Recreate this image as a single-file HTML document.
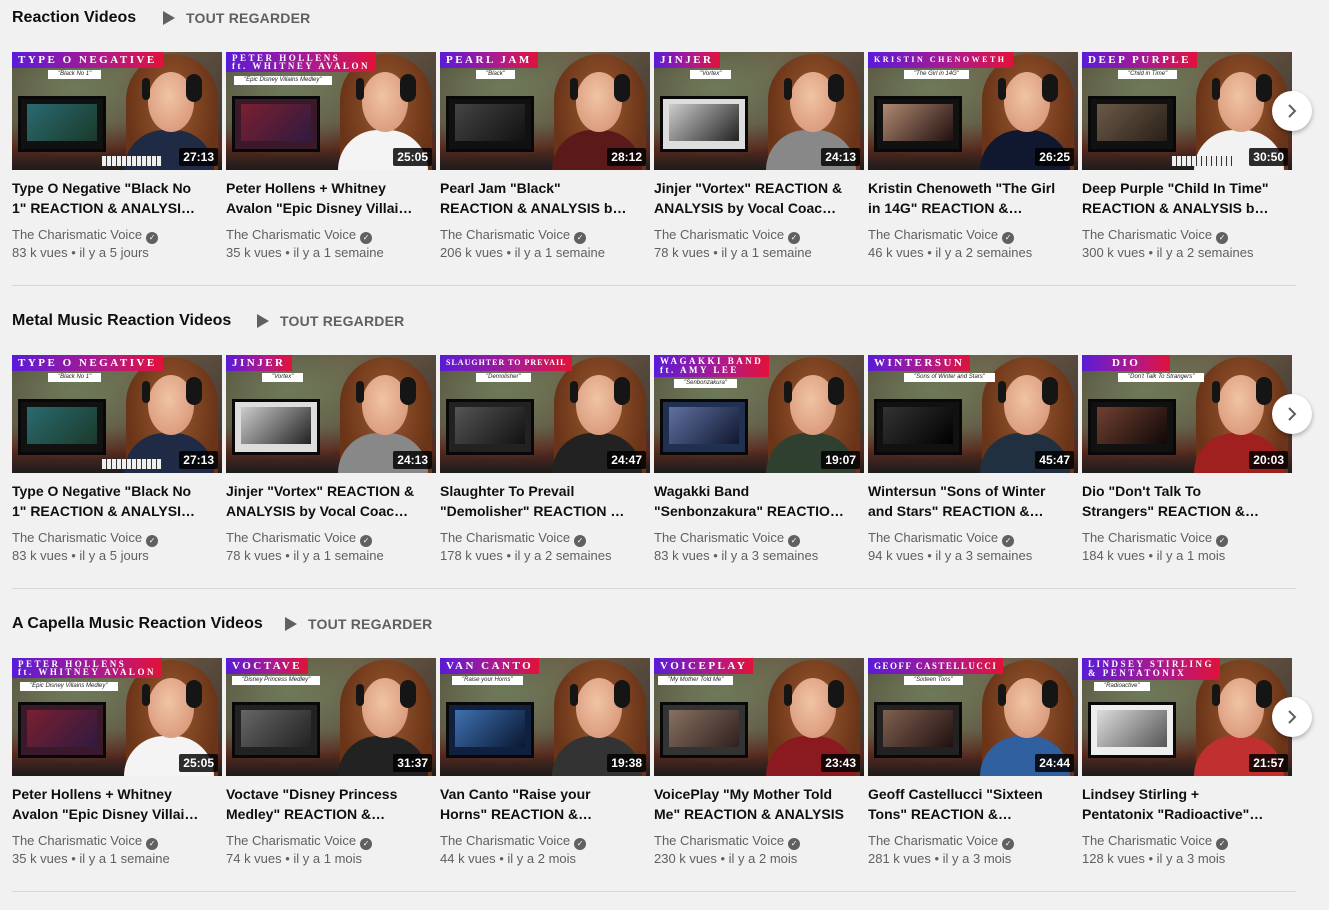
<!DOCTYPE html>
<html><head><meta charset="utf-8"><style>
*{margin:0;padding:0;box-sizing:border-box}
body{width:1329px;height:910px;background:#f1f1f1;font-family:"Liberation Sans",Arial,sans-serif;position:relative;overflow:hidden}
.shelf{position:absolute;left:0;width:1329px;height:303px}
.st{position:absolute;left:12px;top:9px;font-size:16px;font-weight:bold;color:#0f0f0f;white-space:nowrap}
.pl{position:absolute;top:11px;width:0;height:0;border-left:12px solid #606060;border-top:7px solid transparent;border-bottom:7px solid transparent}
.ta{position:absolute;top:10px;font-size:14px;font-weight:bold;color:#606060;letter-spacing:.2px}
.card{position:absolute;top:52px;width:210px}
.th{position:relative;width:210px;height:118px;overflow:hidden;background:linear-gradient(135deg,#4a4030 0%,#6b5a45 40%,#3a3330 100%)}
.wall{position:absolute;left:0;top:0;width:210px;height:118px;background:radial-gradient(ellipse at 30% 30%,#6d7a5a 0%,transparent 60%),linear-gradient(180deg,transparent 60%,#5a2a1e 80%,#1c1c1c 100%)}
.scr{position:absolute;left:6px;top:44px;width:88px;height:56px;background:#111;border:3px solid #080808}
.scr i{position:absolute;left:6px;top:5px;right:6px;bottom:8px;background:linear-gradient(135deg,#2a6a70,#1a3a2a)}
.ban{position:absolute;left:0;top:0;height:16px;padding:0 6px;background:linear-gradient(90deg,#5a1bd8,#b01a8a 60%,#e0123a);color:#fff;font-family:"Liberation Serif",serif;font-weight:bold;font-size:11px;letter-spacing:2.5px;line-height:16px;white-space:nowrap}
.sub{position:absolute;top:18px;left:36px;height:9px;background:#fff;color:#222;font-size:6px;font-style:italic;line-height:9px;padding:0 10px;white-space:nowrap}
.hair{position:absolute;right:4px;top:2px;width:92px;height:130px;border-radius:46px 46px 10px 10px;background:radial-gradient(ellipse at 50% 40%,#9a5a30,#6a3418 70%)}
.face{position:absolute;right:28px;top:20px;width:46px;height:60px;border-radius:50%;background:radial-gradient(ellipse at 45% 40%,#f0c4a4,#d8987a 80%)}
.body{position:absolute;right:8px;top:78px;width:90px;height:50px;border-radius:40px 40px 0 0;background:#1f2a44}
.hp{position:absolute;right:20px;top:22px;width:16px;height:28px;border-radius:8px;background:#151515}
.hp2{position:absolute;right:72px;top:26px;width:8px;height:22px;border-radius:4px;background:#151515}
.keys{position:absolute;left:90px;top:104px;width:60px;height:10px;background:repeating-linear-gradient(90deg,#eee 0 4px,#333 4px 5px)}
.dur{position:absolute;right:4px;bottom:4px;background:rgba(0,0,0,.82);color:#fff;font-size:12px;font-weight:bold;padding:0 4px;height:18px;line-height:18px;border-radius:2px}
.t{margin-top:8px;width:190px;font-size:14px;font-weight:bold;line-height:20px;color:#0f0f0f;height:40px;overflow:hidden;display:-webkit-box;-webkit-line-clamp:2;-webkit-box-orient:vertical}
.c{margin-top:8px;font-size:13px;color:#606060;line-height:18px;white-space:nowrap}
.ck{display:inline-block;width:12px;height:12px;border-radius:50%;background:#606060;color:#fff;font-size:8px;line-height:12px;text-align:center;vertical-align:-1px;margin-left:4px}
.v{font-size:13px;color:#606060;line-height:18px;white-space:nowrap}
.nx{position:absolute;left:1272px;top:39px;width:40px;height:40px;border-radius:50%;background:#fff;box-shadow:0 2px 5px rgba(0,0,0,.3)}
.nx svg{position:absolute;left:12px;top:12px}
.hr{position:absolute;left:12px;top:285px;width:1284px;height:1px;background:#d6d6d6}
</style></head><body>

<div class="shelf" style="top:0">
<div class="st">Reaction Videos</div><div class="pl" style="left:163px"></div><div class="ta" style="left:186px">TOUT REGARDER</div>
<div class="card" style="left:12px"><div class="th"><div class="wall"></div><div class="scr"><i></i></div><div class="hair"></div><div class="body"></div><div class="face"></div><div class="hp"></div><div class="hp2"></div><div class="keys"></div><div class="ban">TYPE O NEGATIVE</div><div class="sub">"Black No 1"</div><div class="dur">27:13</div></div><div class="t">Type O Negative "Black No 1" REACTION &amp; ANALYSIS by Vocal Coach</div><div class="c">The Charismatic Voice<span class="ck">✓</span></div><div class="v">83 k vues • il y a 5 jours</div></div>
<div class="card" style="left:226px"><div class="th"><div class="wall"></div><div class="scr" style="background:#3a1a2a"><i style="background:linear-gradient(135deg,#7a2030,#301a40)"></i></div><div class="hair"></div><div class="body" style="background:#f4f4f4"></div><div class="face"></div><div class="hp"></div><div class="hp2"></div><div class="ban" style="font-size:9px;line-height:8px;height:20px;padding-top:2px">PETER HOLLENS<br>ft. WHITNEY AVALON</div><div class="sub" style="top:24px;left:8px">"Epic Disney Villains Medley"</div><div class="dur">25:05</div></div><div class="t">Peter Hollens + Whitney Avalon "Epic Disney Villains Medley"</div><div class="c">The Charismatic Voice<span class="ck">✓</span></div><div class="v">35 k vues • il y a 1 semaine</div></div>
<div class="card" style="left:440px"><div class="th"><div class="wall"></div><div class="scr" style="background:#111"><i style="background:linear-gradient(135deg,#444,#111)"></i></div><div class="hair"></div><div class="body" style="background:#5a1a1a"></div><div class="face"></div><div class="hp"></div><div class="hp2"></div><div class="ban">PEARL JAM</div><div class="sub">"Black"</div><div class="dur">28:12</div></div><div class="t">Pearl Jam "Black" REACTION &amp; ANALYSIS by Vocal Coach</div><div class="c">The Charismatic Voice<span class="ck">✓</span></div><div class="v">206 k vues • il y a 1 semaine</div></div>
<div class="card" style="left:654px"><div class="th"><div class="wall"></div><div class="scr" style="background:#ddd"><i style="background:linear-gradient(135deg,#ccc,#222)"></i></div><div class="hair"></div><div class="body" style="background:#888"></div><div class="face"></div><div class="hp"></div><div class="hp2"></div><div class="ban">JINJER</div><div class="sub">"Vortex"</div><div class="dur">24:13</div></div><div class="t">Jinjer "Vortex" REACTION &amp; ANALYSIS by Vocal Coach / Opera</div><div class="c">The Charismatic Voice<span class="ck">✓</span></div><div class="v">78 k vues • il y a 1 semaine</div></div>
<div class="card" style="left:868px"><div class="th"><div class="wall"></div><div class="scr" style="background:#111"><i style="background:linear-gradient(135deg,#b08870,#201010)"></i></div><div class="hair"></div><div class="body" style="background:#101830"></div><div class="face"></div><div class="hp"></div><div class="hp2"></div><div class="ban" style="font-size:8px">KRISTIN CHENOWETH</div><div class="sub">"The Girl in 14G"</div><div class="dur">26:25</div></div><div class="t">Kristin Chenoweth "The Girl in 14G" REACTION &amp; ANALYSIS</div><div class="c">The Charismatic Voice<span class="ck">✓</span></div><div class="v">46 k vues • il y a 2 semaines</div></div>
<div class="card" style="left:1082px"><div class="th"><div class="wall"></div><div class="scr" style="background:#111"><i style="background:linear-gradient(135deg,#6a5a48,#2a2018)"></i></div><div class="hair"></div><div class="body" style="background:#f2f2f2"></div><div class="face"></div><div class="hp"></div><div class="hp2"></div><div class="keys"></div><div class="ban">DEEP PURPLE</div><div class="sub">"Child in Time"</div><div class="dur">30:50</div></div><div class="t">Deep Purple "Child In Time" REACTION &amp; ANALYSIS by Vocal Coach</div><div class="c">The Charismatic Voice<span class="ck">✓</span></div><div class="v">300 k vues • il y a 2 semaines</div></div>
<div class="nx" style="top:91px"><svg width="16" height="16" viewBox="0 0 16 16"><path d="M5 2l6 6-6 6" fill="none" stroke="#606060" stroke-width="2"/></svg></div>
<div class="hr"></div>
</div>

<div class="shelf" style="top:303px">
<div class="st">Metal Music Reaction Videos</div><div class="pl" style="left:257px"></div><div class="ta" style="left:280px">TOUT REGARDER</div>
<div class="card" style="left:12px"><div class="th"><div class="wall"></div><div class="scr"><i></i></div><div class="hair"></div><div class="body"></div><div class="face"></div><div class="hp"></div><div class="hp2"></div><div class="keys"></div><div class="ban">TYPE O NEGATIVE</div><div class="sub">"Black No 1"</div><div class="dur">27:13</div></div><div class="t">Type O Negative "Black No 1" REACTION &amp; ANALYSIS by Vocal Coach</div><div class="c">The Charismatic Voice<span class="ck">✓</span></div><div class="v">83 k vues • il y a 5 jours</div></div>
<div class="card" style="left:226px"><div class="th"><div class="wall"></div><div class="scr" style="background:#ddd"><i style="background:linear-gradient(135deg,#ccc,#222)"></i></div><div class="hair"></div><div class="body" style="background:#888"></div><div class="face"></div><div class="hp"></div><div class="hp2"></div><div class="ban">JINJER</div><div class="sub">"Vortex"</div><div class="dur">24:13</div></div><div class="t">Jinjer "Vortex" REACTION &amp; ANALYSIS by Vocal Coach / Opera</div><div class="c">The Charismatic Voice<span class="ck">✓</span></div><div class="v">78 k vues • il y a 1 semaine</div></div>
<div class="card" style="left:440px"><div class="th"><div class="wall"></div><div class="scr" style="background:#222"><i style="background:linear-gradient(135deg,#555,#111)"></i></div><div class="hair"></div><div class="body" style="background:#222"></div><div class="face"></div><div class="hp"></div><div class="hp2"></div><div class="ban" style="font-size:8px;letter-spacing:1px">SLAUGHTER TO PREVAIL</div><div class="sub">"Demolisher"</div><div class="dur">24:47</div></div><div class="t">Slaughter To Prevail "Demolisher" REACTION &amp; ANALYSIS</div><div class="c">The Charismatic Voice<span class="ck">✓</span></div><div class="v">178 k vues • il y a 2 semaines</div></div>
<div class="card" style="left:654px"><div class="th"><div class="wall"></div><div class="scr" style="background:#203050"><i style="background:linear-gradient(135deg,#6070a0,#101830)"></i></div><div class="hair"></div><div class="body" style="background:#304030"></div><div class="face"></div><div class="hp"></div><div class="hp2"></div><div class="ban" style="font-size:9px;line-height:9px;height:22px;padding-top:2px">WAGAKKI BAND<br>ft. AMY LEE</div><div class="sub" style="top:24px;left:20px">"Senbonzakura"</div><div class="dur">19:07</div></div><div class="t">Wagakki Band "Senbonzakura" REACTION &amp; ANALYSIS</div><div class="c">The Charismatic Voice<span class="ck">✓</span></div><div class="v">83 k vues • il y a 3 semaines</div></div>
<div class="card" style="left:868px"><div class="th"><div class="wall"></div><div class="scr" style="background:#111"><i style="background:linear-gradient(135deg,#333,#000)"></i></div><div class="hair"></div><div class="body" style="background:#203040"></div><div class="face"></div><div class="hp"></div><div class="hp2"></div><div class="ban">WINTERSUN</div><div class="sub">"Sons of Winter and Stars"</div><div class="dur">45:47</div></div><div class="t">Wintersun "Sons of Winter and Stars" REACTION &amp; ANALYSIS</div><div class="c">The Charismatic Voice<span class="ck">✓</span></div><div class="v">94 k vues • il y a 3 semaines</div></div>
<div class="card" style="left:1082px"><div class="th"><div class="wall"></div><div class="scr" style="background:#111"><i style="background:linear-gradient(135deg,#704030,#100808)"></i></div><div class="hair"></div><div class="body" style="background:#a02020"></div><div class="face"></div><div class="hp"></div><div class="hp2"></div><div class="ban" style="padding:0 30px">DIO</div><div class="sub">"Don't Talk To Strangers"</div><div class="dur">20:03</div></div><div class="t">Dio "Don't Talk To Strangers" REACTION &amp; ANALYSIS by Vocal Coach</div><div class="c">The Charismatic Voice<span class="ck">✓</span></div><div class="v">184 k vues • il y a 1 mois</div></div>
<div class="nx" style="top:91px"><svg width="16" height="16" viewBox="0 0 16 16"><path d="M5 2l6 6-6 6" fill="none" stroke="#606060" stroke-width="2"/></svg></div>
<div class="hr"></div>
</div>

<div class="shelf" style="top:606px">
<div class="st">A Capella Music Reaction Videos</div><div class="pl" style="left:285px"></div><div class="ta" style="left:308px">TOUT REGARDER</div>
<div class="card" style="left:12px"><div class="th"><div class="wall"></div><div class="scr" style="background:#3a1a2a"><i style="background:linear-gradient(135deg,#7a2030,#301a40)"></i></div><div class="hair"></div><div class="body" style="background:#f4f4f4"></div><div class="face"></div><div class="hp"></div><div class="hp2"></div><div class="ban" style="font-size:9px;line-height:8px;height:20px;padding-top:2px">PETER HOLLENS<br>ft. WHITNEY AVALON</div><div class="sub" style="top:24px;left:8px">"Epic Disney Villains Medley"</div><div class="dur">25:05</div></div><div class="t">Peter Hollens + Whitney Avalon "Epic Disney Villains Medley"</div><div class="c">The Charismatic Voice<span class="ck">✓</span></div><div class="v">35 k vues • il y a 1 semaine</div></div>
<div class="card" style="left:226px"><div class="th"><div class="wall"></div><div class="scr" style="background:#222"><i style="background:linear-gradient(135deg,#666,#222)"></i></div><div class="hair"></div><div class="body" style="background:#222"></div><div class="face"></div><div class="hp"></div><div class="hp2"></div><div class="ban">VOCTAVE</div><div class="sub" style="left:6px">"Disney Princess Medley"</div><div class="dur">31:37</div></div><div class="t">Voctave "Disney Princess Medley" REACTION &amp; ANALYSIS</div><div class="c">The Charismatic Voice<span class="ck">✓</span></div><div class="v">74 k vues • il y a 1 mois</div></div>
<div class="card" style="left:440px"><div class="th"><div class="wall"></div><div class="scr" style="background:#102040"><i style="background:linear-gradient(135deg,#4070b0,#081830)"></i></div><div class="hair"></div><div class="body" style="background:#333"></div><div class="face"></div><div class="hp"></div><div class="hp2"></div><div class="ban">VAN CANTO</div><div class="sub" style="left:12px">"Raise your Horns"</div><div class="dur">19:38</div></div><div class="t">Van Canto "Raise your Horns" REACTION &amp; ANALYSIS</div><div class="c">The Charismatic Voice<span class="ck">✓</span></div><div class="v">44 k vues • il y a 2 mois</div></div>
<div class="card" style="left:654px"><div class="th"><div class="wall"></div><div class="scr" style="background:#333"><i style="background:linear-gradient(135deg,#887060,#302020)"></i></div><div class="hair"></div><div class="body" style="background:#8a1a20"></div><div class="face"></div><div class="hp"></div><div class="hp2"></div><div class="ban">VOICEPLAY</div><div class="sub" style="left:4px">"My Mother Told Me"</div><div class="dur">23:43</div></div><div class="t">VoicePlay "My Mother Told Me" REACTION &amp; ANALYSIS</div><div class="c">The Charismatic Voice<span class="ck">✓</span></div><div class="v">230 k vues • il y a 2 mois</div></div>
<div class="card" style="left:868px"><div class="th"><div class="wall"></div><div class="scr" style="background:#222"><i style="background:linear-gradient(135deg,#806050,#201010)"></i></div><div class="hair"></div><div class="body" style="background:#3060a0"></div><div class="face"></div><div class="hp"></div><div class="hp2"></div><div class="ban" style="font-size:9px;letter-spacing:1.5px">GEOFF CASTELLUCCI</div><div class="sub">"Sixteen Tons"</div><div class="dur">24:44</div></div><div class="t">Geoff Castellucci "Sixteen Tons" REACTION &amp; ANALYSIS</div><div class="c">The Charismatic Voice<span class="ck">✓</span></div><div class="v">281 k vues • il y a 3 mois</div></div>
<div class="card" style="left:1082px"><div class="th"><div class="wall"></div><div class="scr" style="background:#eee"><i style="background:linear-gradient(135deg,#ddd,#555)"></i></div><div class="hair"></div><div class="body" style="background:#c03030"></div><div class="face"></div><div class="hp"></div><div class="hp2"></div><div class="ban" style="font-size:9px;line-height:9px;height:22px;padding-top:2px">LINDSEY STIRLING<br>&amp; PENTATONIX</div><div class="sub" style="top:24px;left:12px">"Radioactive"</div><div class="dur">21:57</div></div><div class="t">Lindsey Stirling + Pentatonix "Radioactive" REACTION &amp; ANALYSIS</div><div class="c">The Charismatic Voice<span class="ck">✓</span></div><div class="v">128 k vues • il y a 3 mois</div></div>
<div class="nx" style="top:91px"><svg width="16" height="16" viewBox="0 0 16 16"><path d="M5 2l6 6-6 6" fill="none" stroke="#606060" stroke-width="2"/></svg></div>
<div class="hr"></div>
</div>
</body></html>
